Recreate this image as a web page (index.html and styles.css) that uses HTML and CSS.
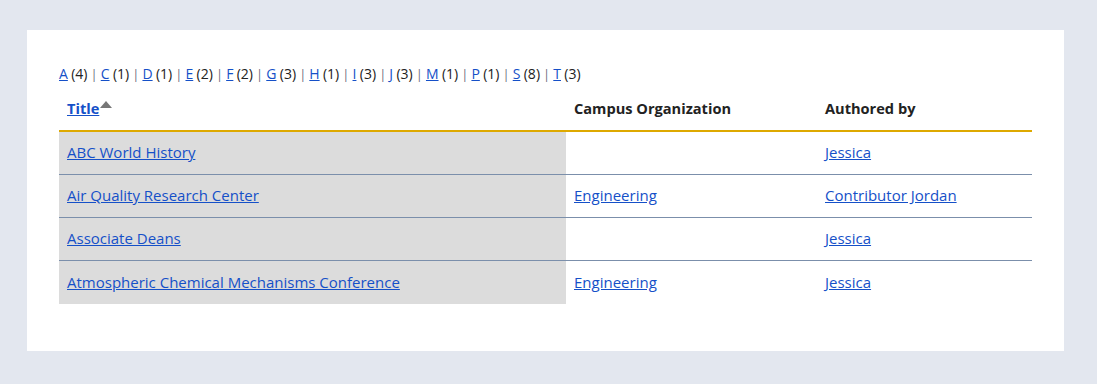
FILE: index.html
```html
<!DOCTYPE html>
<html lang="en">
<head>
<meta charset="utf-8">
<title>Directory</title>
<link rel="stylesheet" href="styles.css">
</head>
<body>
<div class="card">
  <div class="glossary">
    <a href="#">A</a> (4) <span class="sep">|</span> <a href="#">C</a> (1) <span class="sep">|</span> <a href="#">D</a> (1) <span class="sep">|</span> <a href="#">E</a> (2) <span class="sep">|</span> <a href="#">F</a> (2) <span class="sep">|</span> <a href="#">G</a> (3) <span class="sep">|</span> <a href="#">H</a> (1) <span class="sep">|</span> <a href="#">I</a> (3) <span class="sep">|</span> <a href="#">J</a> (3) <span class="sep">|</span> <a href="#">M</a> (1) <span class="sep">|</span> <a href="#">P</a> (1) <span class="sep">|</span> <a href="#">S</a> (8) <span class="sep">|</span> <a href="#">T</a> (3)
  </div>
  <table class="list">
    <thead>
      <tr>
        <th class="col-title"><a href="#">Title</a><span class="sort"></span></th>
        <th class="col-org">Campus Organization</th>
        <th class="col-auth">Authored by</th>
      </tr>
    </thead>
    <tbody>
      <tr>
        <td class="active"><a href="#">ABC World History</a></td>
        <td></td>
        <td><a href="#">Jessica</a></td>
      </tr>
      <tr>
        <td class="active"><a href="#">Air Quality Research Center</a></td>
        <td><a href="#">Engineering</a></td>
        <td><a href="#">Contributor Jordan</a></td>
      </tr>
      <tr>
        <td class="active"><a href="#">Associate Deans</a></td>
        <td></td>
        <td><a href="#">Jessica</a></td>
      </tr>
      <tr>
        <td class="active"><a href="#">Atmospheric Chemical Mechanisms Conference</a></td>
        <td><a href="#">Engineering</a></td>
        <td><a href="#">Jessica</a></td>
      </tr>
    </tbody>
  </table>
</div>
</body>
</html>
```
FILE: styles.css
```css
html, body {
  margin: 0;
  padding: 0;
}
body {
  background: #e3e7ef;
  padding: 30px 33px 33px 27px;
  font-family: "Open Sans", "Liberation Sans", sans-serif;
  font-size: 15px;
  color: #222;
}
.card {
  background: #fff;
  height: 321px;
  box-sizing: border-box;
  padding: 34px 32px 0 32px;
}
a {
  color: #1550c8;
  text-decoration: underline;
}
.glossary {
  line-height: 20px;
  height: 20px;
  color: #222;
  font-size: 14px;
  word-spacing: -0.3px;
}
.sep {
  color: #667;
  font-size: 12px;
}
.list {
  width: 973px;
  border-collapse: collapse;
  margin-top: 4px;
}
.list th {
  text-align: left;
  font-weight: 700;
  height: 40px;
  padding: 0 8px 2px;
  border-bottom: 2px solid #dea900;
  vertical-align: middle;
  font-size: 14.6px;
}
.col-title { width: 491px; }
.col-org { width: 235px; }
.list th a { font-weight: 700; }
.sort {
  display: inline-block;
  width: 0;
  height: 0;
  border-left: 6px solid transparent;
  border-right: 6px solid transparent;
  border-bottom: 7px solid #777;
  vertical-align: 6px;
  margin-left: 1px;
}
.list td {
  height: 40px;
  padding: 0 8px 2px;
  border-bottom: 1px solid #7b8fab;
  vertical-align: middle;
}
.list tr:last-child td {
  border-bottom: 0;
  height: 41px;
}
.list td.active {
  background: #dcdcdc;
}
```
